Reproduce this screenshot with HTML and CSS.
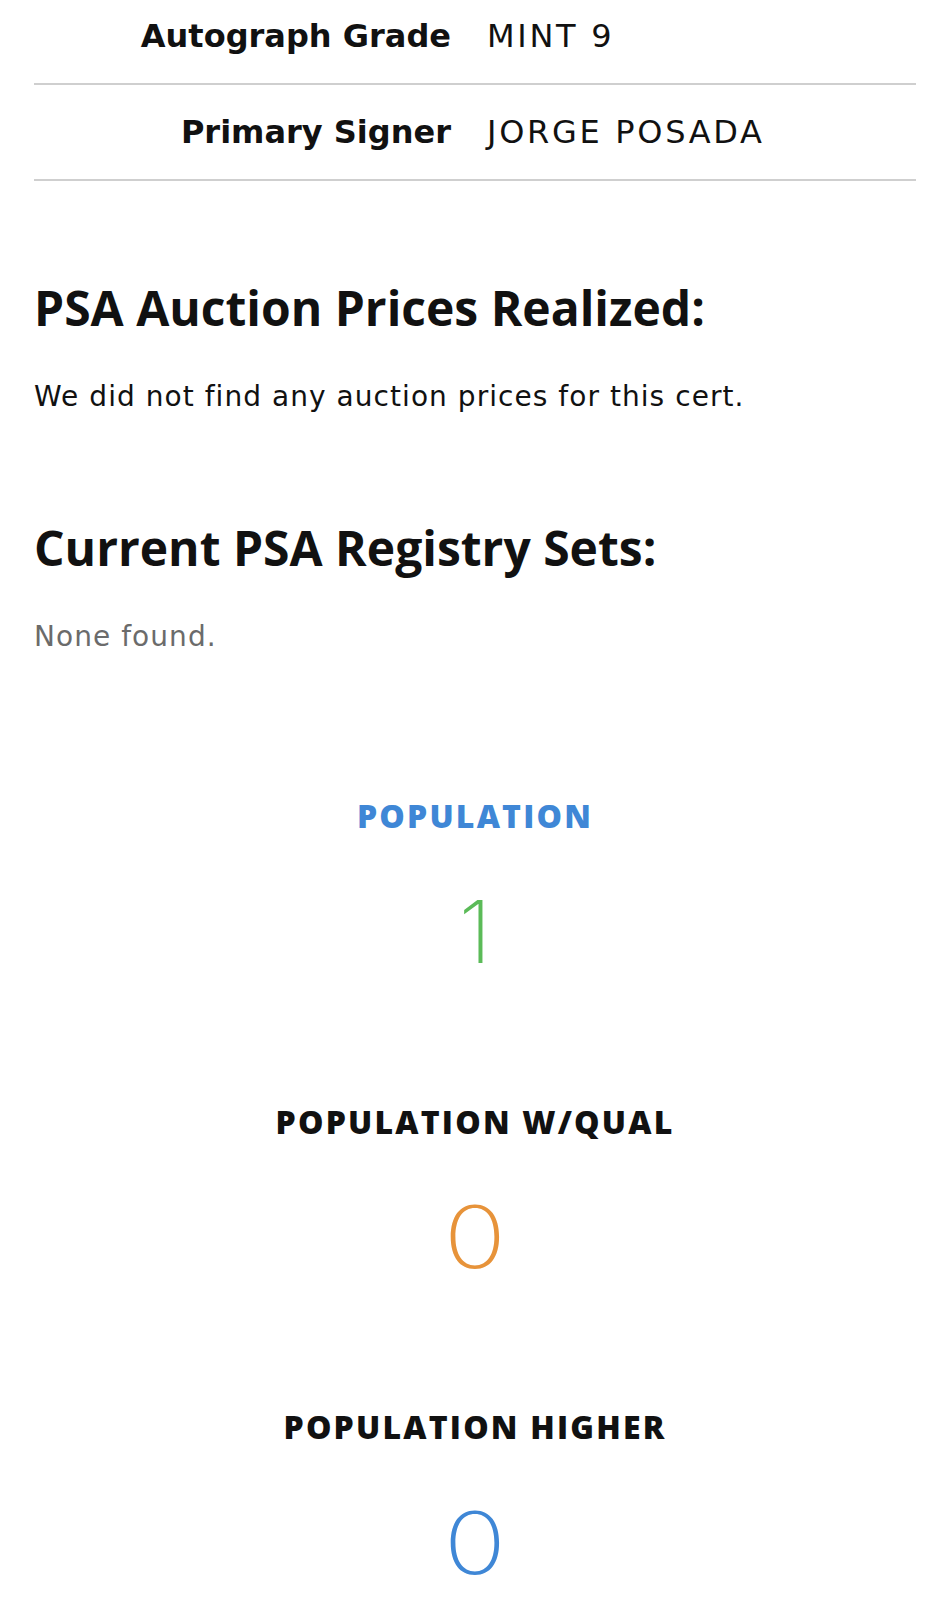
FILE: index.html
```html
<!DOCTYPE html>
<html lang="en">
<head>
<meta charset="utf-8">
<title>Cert</title>
<link rel="stylesheet" href="styles.css">
</head>
<body>
<div class="page">
  <div class="details">
    <div class="row first">
      <div class="label">Autograph Grade</div>
      <div class="value">MINT 9</div>
    </div>
    <div class="row">
      <div class="label">Primary Signer</div>
      <div class="value">JORGE POSADA</div>
    </div>
  </div>

  <section class="block apr">
    <h2>PSA Auction Prices Realized:</h2>
    <p class="text">We did not find any auction prices for this cert.</p>
  </section>

  <section class="block reg">
    <h2>Current PSA Registry Sets:</h2>
    <p class="text muted">None found.</p>
  </section>

  <div class="pops">
    <div class="pop">
      <div class="pop-title blue">POPULATION</div>
      <div class="pop-num"><span class="digit green">1</span></div>
    </div>
    <div class="pop">
      <div class="pop-title">POPULATION W/QUAL</div>
      <div class="pop-num"><span class="digit zero orange">0</span></div>
    </div>
    <div class="pop">
      <div class="pop-title">POPULATION HIGHER</div>
      <div class="pop-num"><span class="digit zero blue">0</span></div>
    </div>
  </div>
</div>
</body>
</html>
```

FILE: styles.css
```css
html, body {
  margin: 0;
  padding: 0;
  background: #ffffff;
}
body {
  font-family: "Open Sans", "Lato", sans-serif;
  color: #111111;
}
.page {
  padding: 0 34px;
}
.details {
  margin-top: -11px;
}
.row {
  display: grid;
  grid-template-columns: 1fr 1fr;
  align-items: center;
  height: 94px;
  border-bottom: 2px solid #cfcfcf;
  font-family: "DejaVu Sans", sans-serif;
}
.label {
  text-align: right;
  padding-right: 24px;
  font-weight: 700;
  font-size: 32px;
}
.value {
  padding-left: 12px;
  font-size: 32px;
  font-weight: 400;
  letter-spacing: 2.7px;
}
.block h2 {
  margin: 0;
  font-size: 48px;
  font-weight: 700;
  line-height: 1.2;
}
.apr {
  margin-top: 98px;
}
.reg {
  margin-top: 106px;
}
.text {
  margin: 43px 0 0;
  font-family: "DejaVu Sans", sans-serif;
  font-size: 28px;
  line-height: 1.2;
  letter-spacing: 1.05px;
}
.muted {
  color: #6b6b6b;
}
.pops {
  margin-top: 144px;
  display: flex;
  flex-direction: column;
  align-items: center;
}
.pop {
  display: flex;
  flex-direction: column;
  align-items: center;
}
.pop + .pop {
  margin-top: 128px;
}
.pop-title {
  font-size: 32px;
  font-weight: 800;
  line-height: 1.2;
  letter-spacing: 2.2px;
}
.pop-num {
  margin-top: 53px;
  font-family: "Inter", "Open Sans", sans-serif;
  font-size: 86px;
  font-weight: 200;
  line-height: 1;
}
.digit {
  display: inline-block;
}
.digit.zero {
  transform: scaleX(1.2);
}
.blue { color: #3f87d6; }
.green { color: #5bbb58; }
.orange { color: #e7933a; }
```
